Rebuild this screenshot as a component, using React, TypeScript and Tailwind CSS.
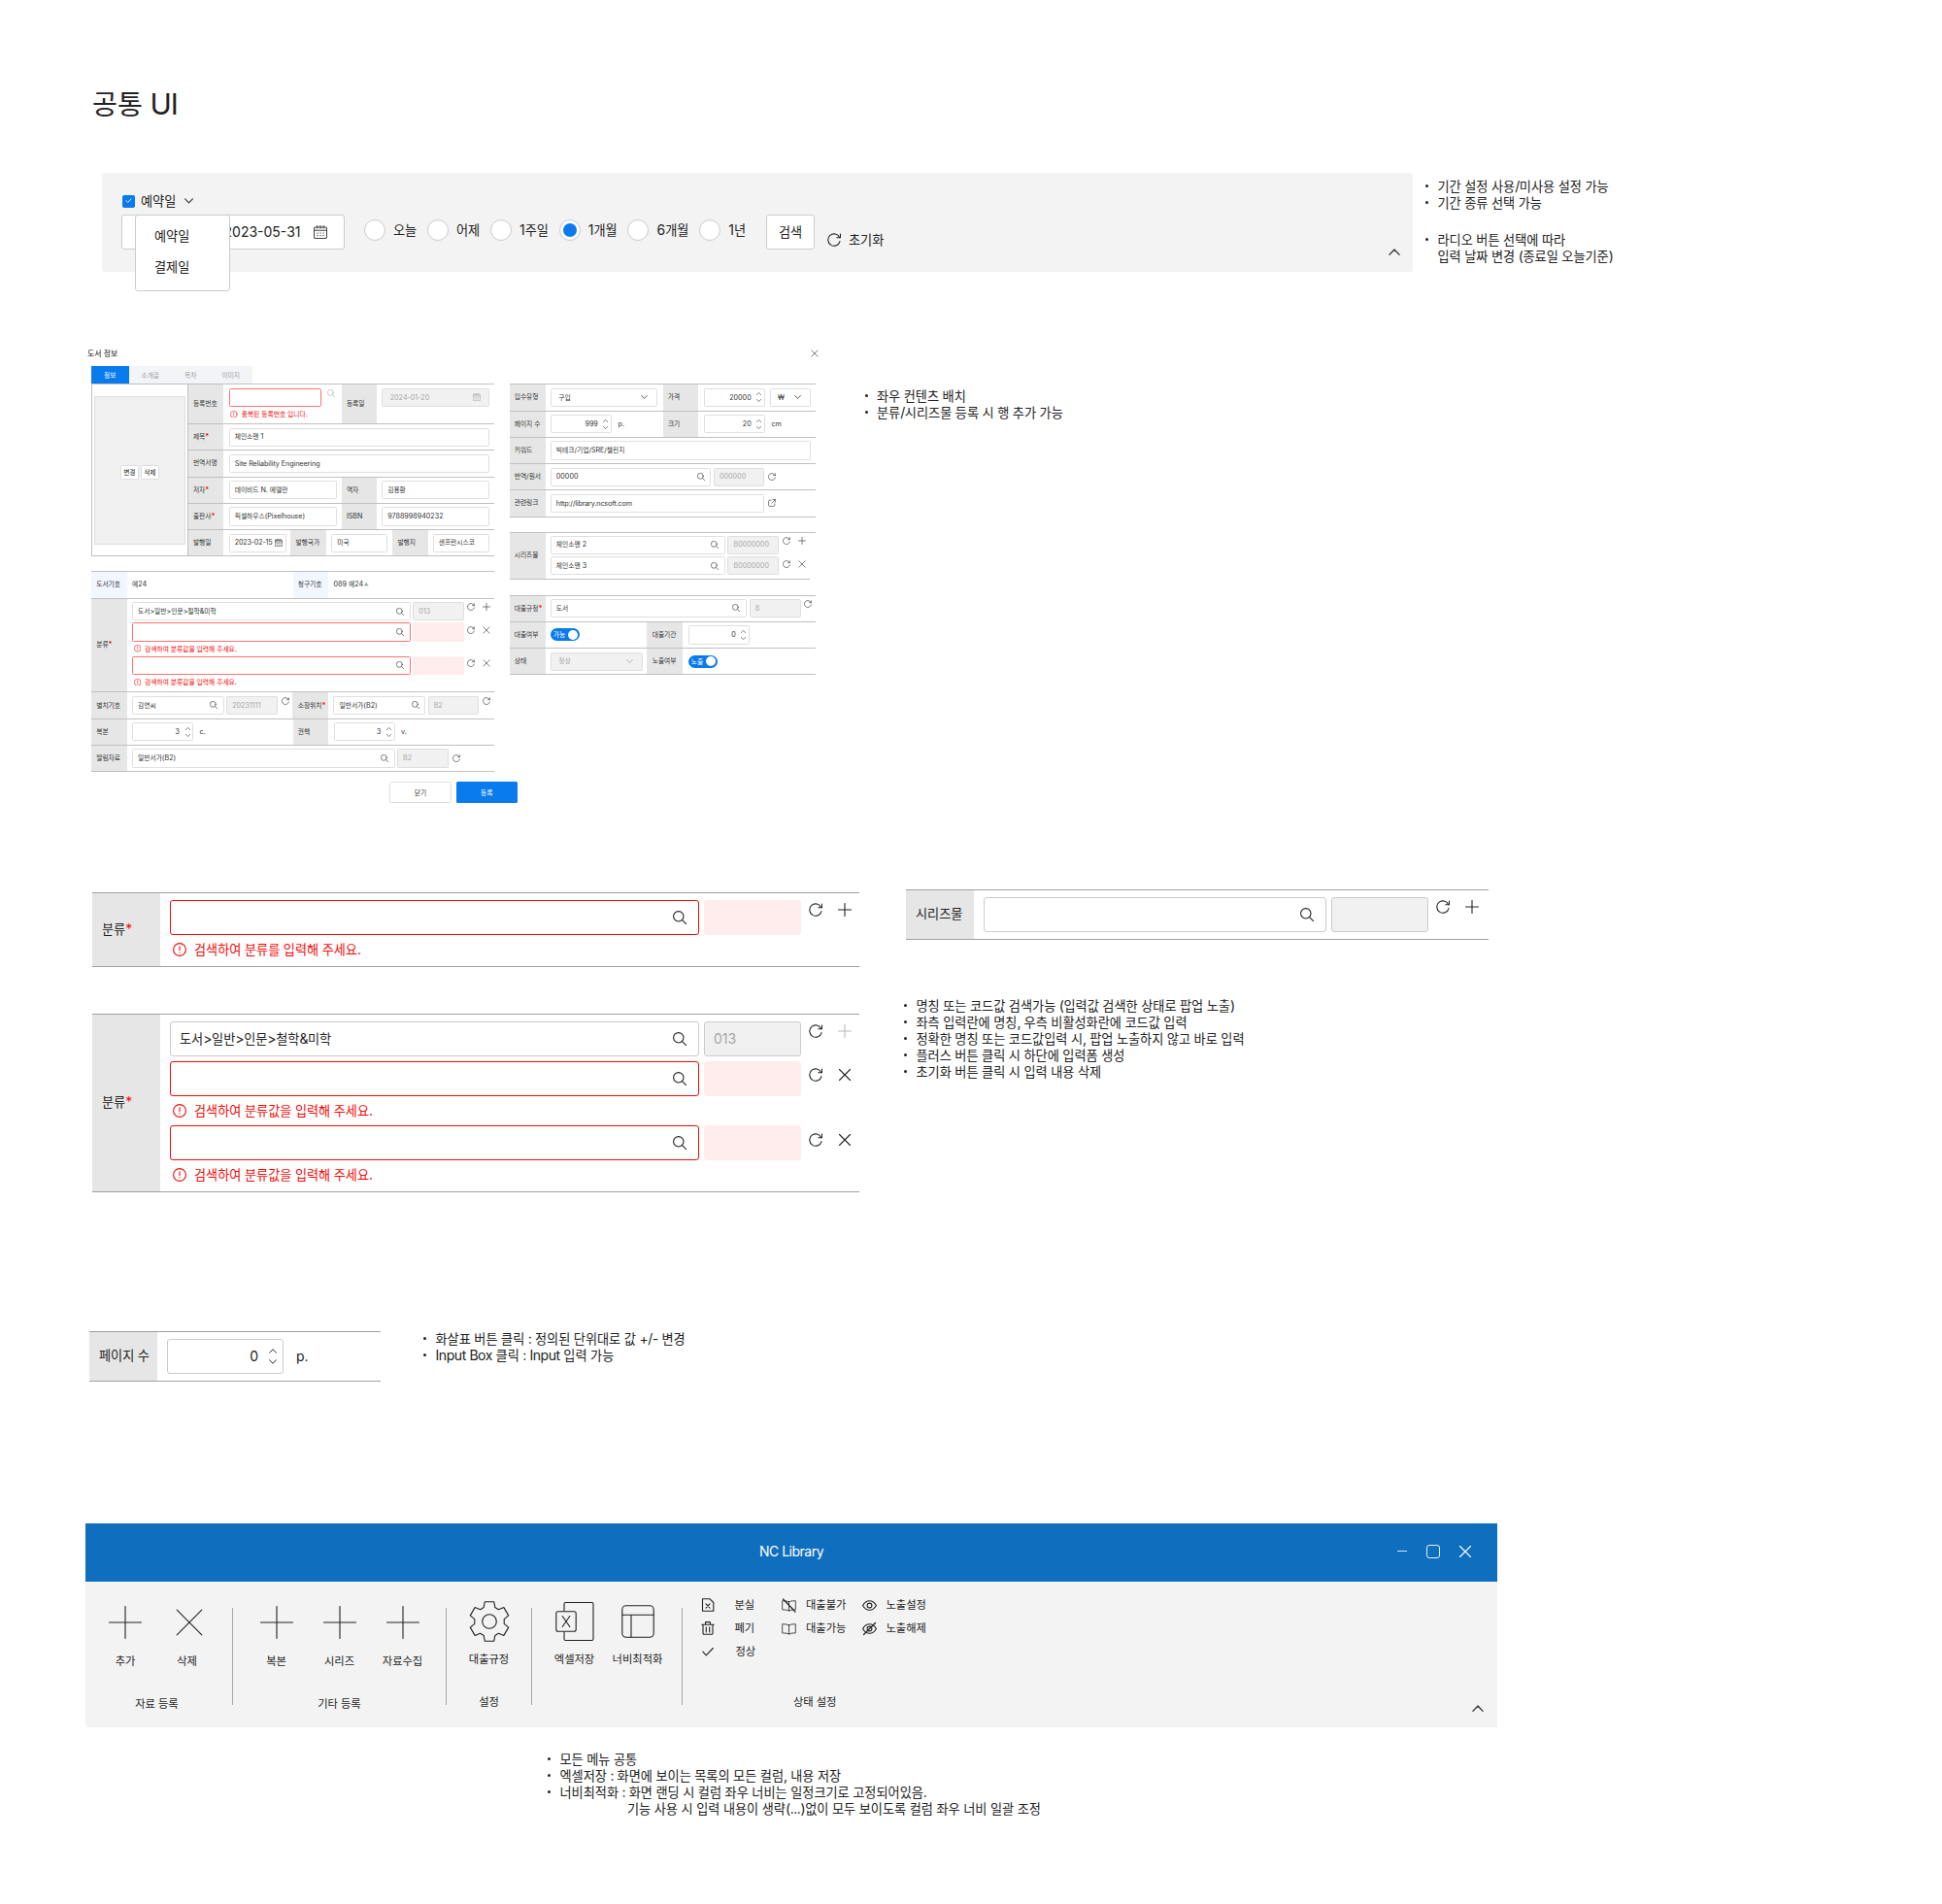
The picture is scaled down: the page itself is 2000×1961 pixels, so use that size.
import React, { type ReactNode } from 'react';

/* Hangul runs are set slightly smaller than the Latin text around them; runs without digits are tracked in. */
function T({ children }: { children: string }) {
  const parts = children.split(/([\u3131-\u318e\uac00-\ud7a3]+)/);
  return (
    <span className="whitespace-pre">
      {parts.map((p, i) =>
        i % 2 ? (
          <span key={i} className="text-[0.94em] leading-none">
            {p}
          </span>
        ) : /\d/.test(p) ? (
          p
        ) : (
          <span key={i} className="tracking-(--latin)">
            {p}
          </span>
        ),
      )}
    </span>
  );
}

/* ---------- icons ---------- */
type IconProps = { className?: string };

function Svg({ className = '', box = 14, children }: { className?: string; box?: number; children: ReactNode }) {
  return (
    <svg
      viewBox={`0 0 ${box} ${box}`}
      className={`shrink-0 ${className}`}
      fill="none"
      stroke="currentColor"
      strokeWidth="1.1"
      strokeLinecap="round"
      strokeLinejoin="round"
    >
      {children}
    </svg>
  );
}
const Search = ({ className }: IconProps) => (
  <Svg className={className}>
    <circle cx="5.8" cy="5.8" r="5.2" />
    <path d="M9.6 9.6l4 4" />
  </Svg>
);
const Refresh = ({ className }: IconProps) => (
  <Svg className={className}>
    <path d="M13 8.6A6.2 6.2 0 1 1 12.6 4.4" />
    <path d="M13.5 1v3.7H9.8" />
  </Svg>
);
const Plus = ({ className }: IconProps) => (
  <Svg className={className}>
    <path d="M7 .5v13M.5 7h13" />
  </Svg>
);
const Cross = ({ className }: IconProps) => (
  <Svg className={className}>
    <path d="M1.5 1.5l11 11M12.5 1.5l-11 11" />
  </Svg>
);
const Alert = ({ className }: IconProps) => (
  <Svg className={className}>
    <circle cx="7" cy="7" r="6.4" />
    <path d="M7 3.8v3.8M7 9.7v.3" />
  </Svg>
);
const Calendar = ({ className }: IconProps) => (
  <Svg className={className}>
    <rect x=".5" y="2" width="13" height="11.5" rx="1.5" />
    <path d="M.5 5.2h13M3.8 .5v2.6M10.2 .5v2.6M7 .5v2.6" />
    <path d="M3.8 8h.4M6.8 8h.4M9.8 8h.4M3.8 10.6h.4M6.8 10.6h.4M9.8 10.6h.4" />
  </Svg>
);
const Chevron = ({ className }: IconProps) => (
  <svg viewBox="0 0 10 6" className={`shrink-0 ${className}`} fill="none" stroke="currentColor" strokeWidth="1.200" strokeLinecap="round" strokeLinejoin="round">
    <path d="M.7 .7L5 5.2 9.3 .7" />
  </svg>
);
const External = ({ className }: IconProps) => (
  <Svg className={className}>
    <path d="M5.5 2H3a2 2 0 0 0-2 2v7a2 2 0 0 0 2 2h7a2 2 0 0 0 2-2V8.500M8.500 1H13v4.500M13 1L7 7" />
  </Svg>
);

/* ---------- notes ---------- */
function Notes({ items, className = '' }: { items: string[]; className?: string }) {
  return (
    <ul className={`text-[14px] leading-[17.1px] text-[#222] ${className}`}>
      {items.map((line) => (
        <li key={line} className="flex">
          <span className="flex h-[17px] w-[12.500px] shrink-0 items-center">
            <i className="size-[3px] rounded-full bg-[#222]" />
          </span>
          <span>
            {line.split('\n').map((l) => (
              <span key={l} className="block">
                <T>{l}</T>
              </span>
            ))}
          </span>
        </li>
      ))}
    </ul>
  );
}

/* ---------- full size form parts ---------- */
type Kind = 'normal' | 'error' | 'disabled' | 'pink';
const kinds: Record<Kind, string> = {
  normal: 'border-[#ccc] bg-white text-[#222]',
  error: 'border-[#f50a0a] bg-white text-[#222]',
  disabled: 'border-[#ccc] bg-[#f0f0f0] text-[#a6a6a6]',
  pink: 'border-[#ffecec] bg-[#ffecec] text-[#222]',
};
const miniKinds: Record<Kind, string> = {
  normal: 'border-[#dfdfdf] bg-white text-[#333]',
  error: 'border-[#fb7272] bg-white text-[#333]',
  disabled: 'border-[#dedede] bg-[#f1f1f1] text-[#a8a8a8]',
  pink: 'border-[#ffecec] bg-[#ffecec] text-[#333]',
};

function Field({ kind = 'normal', className = '', text = '', search = false }: { kind?: Kind; className?: string; text?: string; search?: boolean }) {
  return (
    <div className={`flex h-9 shrink-0 items-center rounded-[3px] border pb-px pl-[9px] ${kinds[kind]} ${className}`}>
      <T>{text}</T>
      {search && <Search className="mr-[12px] ml-auto size-[14px]" />}
    </div>
  );
}

function ErrorText({ text }: { text: string }) {
  return (
    <p className="ml-[2.500px] flex items-center text-[14px] leading-[16px] text-[#f50a0a]">
      <Alert className="mr-[8.500px] size-[14px]" />
      <T>{text}</T>
    </p>
  );
}

function FormLabel({ text, required, className = '' }: { text: string; required?: boolean; className?: string }) {
  return (
    <div className={`flex shrink-0 items-center bg-[#e6e6e6] pb-[2px] pl-[10px] text-[#222] ${className}`}>
      <T>{text}</T>
      {required && <span className="text-[#f50a0a]">*</span>}
    </div>
  );
}

function ClassRow({ text = '', kind = 'normal', code = '', remove, mutedPlus, drop }: { text?: string; kind?: Kind; code?: string; remove?: boolean; mutedPlus?: boolean; drop: string }) {
  return (
    <div className="flex">
      <Field kind={kind} text={text} search className="w-[545px]" />
      <Field kind={kind === 'error' ? 'pink' : 'disabled'} text={code} className="ml-[5px] w-[100px]" />
      <div className={`ml-2 flex gap-4 ${drop}`}>
        <Refresh className="size-[14px]" />
        {remove ? <Cross className="size-[14px]" /> : <Plus className={mutedPlus ? 'size-[14px] text-[#bbb]' : 'size-[14px]'} />}
      </div>
    </div>
  );
}

/* ---------- compact form parts ---------- */
function MRow({ children, className = 'h-[27.25px]' }: { children: ReactNode; className?: string }) {
  return <div className={`flex items-center border-t border-[#c0c0c0] ${className}`}>{children}</div>;
}
function MLabel({ text, required, className = 'w-[36.500px]', blue }: { text: string; required?: boolean; className?: string; blue?: boolean }) {
  return (
    <div className={`flex h-full shrink-0 items-center pb-px pl-[5.200px] text-[#333] ${blue ? 'bg-[#f1f6ff]' : 'bg-[#e6e6e6]'} ${className}`}>
      <T>{text}</T>
      {required && <span className="font-bold text-[#f50a0a]">*</span>}
    </div>
  );
}
function MBox({ className = '', text = '', kind = 'normal', icon }: { className?: string; text?: string; kind?: Kind; icon?: 'search' | 'cal' | 'chev' }) {
  return (
    <div className={`flex h-[19.200px] shrink-0 items-center rounded-[1.500px] border pb-[0.500px] pl-[5px] ${miniKinds[kind]} ${className}`}>
      <T>{text}</T>
      {icon === 'search' && <Search className="mr-[5.500px] ml-auto size-[8px] text-[#333]" />}
      {icon === 'cal' && <Calendar className="mr-[2.500px] ml-auto size-[8px]" />}
      {icon === 'chev' && <Chevron className="mr-[9px] ml-auto h-[4px] w-[7px]" />}
    </div>
  );
}
function MStepper({ value, className = '' }: { value: string; className?: string }) {
  return (
    <div className={`flex h-[19.200px] w-[63px] shrink-0 items-center justify-end rounded-[1.500px] border border-[#dfdfdf] bg-white pr-[2.500px] text-[#333] ${className}`}>
      <T>{value}</T>
      <span className="ml-[5.500px] flex flex-col gap-[4px]">
        <Chevron className="h-[3px] w-[5px] rotate-180" />
        <Chevron className="h-[3px] w-[5px]" />
      </span>
    </div>
  );
}
function MError({ text }: { text: string }) {
  return (
    <p className="ml-[1.500px] flex items-center leading-[9px] text-[#f50a0a]">
      <Alert className="mr-[4px] size-[7.500px]" />
      <T>{text}</T>
    </p>
  );
}
const MRefresh = ({ className = '' }: IconProps) => <Refresh className={`size-[8px] text-[#333] ${className}`} />;
function Toggle({ text, className = '' }: { text: string; className?: string }) {
  return (
    <div className={`flex h-[13px] w-[30.500px] shrink-0 items-center justify-between rounded-full bg-[#0a7bed] pr-[2px] pl-[3px] text-white ${className}`}>
      <T>{text}</T>
      <i className="size-[10px] rounded-full bg-white" />
    </div>
  );
}
function MClass({ text = '', kind = 'normal', code = '', remove }: { text?: string; kind?: Kind; code?: string; remove?: boolean }) {
  const drop = remove ? 'mt-[3.500px]' : 'mt-[1px]';
  return (
    <div className="flex">
      <MBox kind={kind} text={text} icon="search" className="w-[286.700px]" />
      <MBox kind={kind === 'error' ? 'pink' : 'disabled'} text={code} className="ml-[2.500px] w-[52.500px]" />
      <MRefresh className={`ml-[3.500px] ${drop}`} />
      {remove ? <Cross className={`ml-[8px] size-[8px] text-[#333] ${drop}`} /> : <Plus className={`ml-[8px] size-[8px] text-[#333] ${drop}`} />}
    </div>
  );
}

function BookDialog() {
  return (
    <section className="ml-[90px] w-[753px] shrink-0 text-[7.200px] leading-[9px] [--latin:-0.01em]">
      <header className="flex h-4 items-center justify-between text-[8.400px] text-[#111]">
        <T>도서 정보</T>
        <Cross className="size-[8px] text-[#333]" />
      </header>
      <div className="mt-[5px] ml-1 flex items-start">
        <div className="w-[415px]">
          <nav className="flex h-[18.300px] w-[166px] bg-[#f2f4f8] text-[#a0a0a0]">
            <span className="mr-[1.500px] flex w-[38.500px] items-center justify-center bg-[#0a7bed] text-white">
              <T>정보</T>
            </span>
            {['소개글', '목차', '이미지'].map((t) => (
              <span key={t} className="flex w-[41.500px] items-center justify-center">
                <T>{t}</T>
              </span>
            ))}
          </nav>
          <div className="flex border-b border-[#c0c0c0]">
            <div className="w-[99.700px] shrink-0 border-x border-t border-[#c0c0c0] px-[1.500px] pt-[12px]">
              <div className="flex h-[153px] items-center justify-center gap-[2.500px] border border-[#dedede] bg-[#f0f0f0] pt-[3px]">
                {['변경', '삭제'].map((t) => (
                  <span key={t} className="flex h-[15px] w-[18.500px] items-center justify-center rounded-[1.500px] border border-[#dedede] bg-white text-[#222]">
                    <T>{t}</T>
                  </span>
                ))}
              </div>
            </div>
            <div className="flex-1">
              <MRow className="h-[40.800px]">
                <MLabel text="등록번호" className="w-[36.500px]" />
                <div className="ml-[5.500px] w-[116px] self-start pt-[3.700px]">
                  <div className="flex">
                    <MBox kind="error" className="w-[95px]" />
                    <Search className="mt-[1px] ml-[6px] size-[8px] text-[#aaa]" />
                  </div>
                  <div className="mt-[3px]">
                    <MError text="중복된 등록번호 입니다." />
                  </div>
                </div>
                <MLabel text="등록일" className="w-[36.500px]" />
                <MBox kind="disabled" text="2024-01-20" icon="cal" className="mt-[3.700px] ml-[5px] w-[110.700px] self-start pr-[5.500px] pl-[7.500px]" />
              </MRow>
              <MRow>
                <MLabel text="제목" required />
                <MBox text="체인소맨 1" className="ml-[5.500px] w-[268.300px]" />
              </MRow>
              <MRow>
                <MLabel text="번역서명" />
                <MBox text="Site Reliability Engineering" className="ml-[5.500px] w-[268.300px]" />
              </MRow>
              <MRow>
                <MLabel text="저자" required />
                <MBox text="데이비드 N. 에델만" className="mr-[5px] ml-[5.500px] w-[111px]" />
                <MLabel text="역자" />
                <MBox text="김용환" className="ml-[5px] w-[110.700px]" />
              </MRow>
              <MRow>
                <MLabel text="출판사" required />
                <MBox text="픽셀하우스(Pixelhouse)" className="mr-[5px] ml-[5.500px] w-[111px]" />
                <MLabel text="ISBN" />
                <MBox text="9788998940232" className="ml-[5px] w-[110.700px]" />
              </MRow>
              <MRow>
                <MLabel text="발행일" />
                <MBox text="2023-02-15" icon="cal" className="mr-[4.500px] ml-[5.500px] w-[59px] pl-[2px] tracking-[-0.025em]" />
                <MLabel text="발행국가" />
                <MBox text="미국" className="mr-[5px] ml-[5.500px] w-[58px]" />
                <MLabel text="발행지" />
                <MBox text="샌프란시스코" className="ml-[5px] w-[58px]" />
              </MRow>
            </div>
          </div>

          <div className="mt-[15px] border-b border-[#c0c0c0]">
            <MRow>
              <MLabel text="도서기호" blue />
              <span className="w-[171px] pb-px pl-[5.500px] text-[#333]">
                <T>에24</T>
              </span>
              <MLabel text="청구기호" blue />
              <span className="pb-px pl-[5.500px] text-[#333]">
                <T>089 에24ㅅ</T>
              </span>
            </MRow>
            <MRow className="h-[96.800px]">
              <MLabel text="분류" required />
              <div className="ml-[5.500px] self-start pt-[3.700px]">
                <MClass text="도서>일반>인문>철학&미학" code="013" />
                <div className="mt-[2px]">
                  <MClass kind="error" remove />
                </div>
                <div className="my-[3px]">
                  <MError text="검색하여 분류값을 입력해 주세요." />
                </div>
                <MClass kind="error" remove />
                <div className="mt-[3px]">
                  <MError text="검색하여 분류값을 입력해 주세요." />
                </div>
              </div>
            </MRow>
            <MRow>
              <MLabel text="별치기호" />
              <MBox text="김연씨" icon="search" className="ml-[5.500px] w-[94.700px]" />
              <MBox text="20231111" kind="disabled" className="ml-[2.500px] w-[52.500px]" />
              <MRefresh className="mr-[3.300px] mb-[9px] ml-[4.500px]" />
              <MLabel text="소장위치" required />
              <MBox text="일반서가(B2)" icon="search" className="ml-[5.500px] w-[94.700px]" />
              <MBox text="B2" kind="disabled" className="ml-[2.500px] w-[52.500px]" />
              <MRefresh className="mb-[9px] ml-[3.500px]" />
            </MRow>
            <MRow>
              <MLabel text="복본" />
              <MStepper value="3" className="ml-[5.500px]" />
              <span className="w-[102.500px] pl-[6.500px] text-[#333]">c.</span>
              <MLabel text="권책" />
              <MStepper value="3" className="ml-[5.500px]" />
              <span className="pl-[6.500px] text-[#333]">v.</span>
            </MRow>
            <MRow>
              <MLabel text="딸림자료" />
              <MBox text="일반서가(B2)" icon="search" className="ml-[5.500px] w-[270.500px]" />
              <MBox text="B2" kind="disabled" className="ml-[2.500px] w-[52.500px]" />
              <MRefresh className="ml-[4px]" />
            </MRow>
          </div>
        </div>

        <div className="mt-[18.300px] ml-[15.500px] w-[315.500px]">
          <div className="border-b border-[#c0c0c0]">
            <MRow>
              <MLabel text="입수유형" className="w-[37px]" />
              <MBox text="구입" icon="chev" className="mr-[5.700px] ml-[5.300px] w-[110.200px] pl-[7.500px]" />
              <MLabel text="가격" />
              <MStepper value="20000" className="ml-[5.500px]" />
              <MBox text="₩" icon="chev" className="ml-[5.300px] w-[42.300px] pl-[7px]" />
            </MRow>
            <MRow>
              <MLabel text="페이지 수" className="w-[37px]" />
              <MStepper value="999" className="ml-[5.300px]" />
              <span className="w-[52.900px] pl-[6.800px] text-[#333]">p.</span>
              <MLabel text="크기" />
              <MStepper value="20" className="ml-[5.500px]" />
              <span className="pl-[6.800px] text-[#333]">cm</span>
            </MRow>
            <MRow>
              <MLabel text="키워드" className="w-[37px]" />
              <MBox text="빅테크/기업/SRE/챌린지" className="ml-[5.300px] w-[268.500px]" />
            </MRow>
            <MRow>
              <MLabel text="번역/원서" className="w-[37px]" />
              <MBox text="00000" icon="search" className="ml-[5.300px] w-[165.600px]" />
              <MBox text="000000" kind="disabled" className="ml-[2.600px] w-[52.500px]" />
              <MRefresh className="ml-[4px]" />
            </MRow>
            <MRow>
              <MLabel text="관련링크" className="w-[37px]" />
              <MBox text="http://library.ncsoft.com" className="ml-[5.300px] w-[220.700px] [--latin:-0.02em]" />
              <External className="ml-[4px] size-[8px] text-[#333]" />
            </MRow>
          </div>

          <div className="mt-[15px]">
            <MRow className="h-[48px]">
              <MLabel text="시리즈물" className="w-[37px]" />
              <div className="ml-[5.300px] flex flex-col gap-[2.500px]">
                {['체인소맨 2', '체인소맨 3'].map((t, i) => (
                  <div key={t} className="flex">
                    <MBox text={t} icon="search" className="w-[180.200px]" />
                    <MBox text="B0000000" kind="disabled" className="ml-[2.500px] w-[52.900px]" />
                    <MRefresh className={i ? 'mt-[4px] ml-[3.500px]' : 'mt-[1.500px] ml-[3.500px]'} />
                    {i ? <Cross className="mt-[4px] ml-[8px] size-[8px] text-[#333]" /> : <Plus className="mt-[1.500px] ml-[8px] size-[8px] text-[#333]" />}
                  </div>
                ))}
              </div>
            </MRow>
            <hr className="w-[309px] border-[#c0c0c0]" />
          </div>

          <div className="mt-[16px] border-b border-[#c0c0c0]">
            <MRow>
              <MLabel text="대출규정" required className="w-[37px]" />
              <MBox text="도서" icon="search" className="ml-[5.300px] w-[202.200px]" />
              <MBox text="8" kind="disabled" className="ml-[2.800px] w-[52.800px]" />
              <MRefresh className="mb-[9px] ml-[3.600px]" />
            </MRow>
            <MRow>
              <MLabel text="대출여부" className="w-[37px]" />
              <Toggle text="가능" className="mr-[69.200px] ml-[5.300px]" />
              <MLabel text="대출기간" className="w-[37px]" />
              <MStepper value="0" className="ml-[5.200px]" />
            </MRow>
            <MRow>
              <MLabel text="상태" className="w-[37px]" />
              <MBox text="정상" kind="disabled" icon="chev" className="mr-[4.800px] ml-[5.300px] w-[94.900px] pl-[7.500px]" />
              <MLabel text="노출여부" className="w-[37px]" />
              <Toggle text="노출" className="ml-[5.200px]" />
            </MRow>
          </div>
        </div>
      </div>
      <footer className="mt-[10px] ml-[311px] flex gap-[4.500px]">
        <span className="flex h-[22px] w-[64px] items-center justify-center rounded-[1.500px] border border-[#dedede] text-[#333]">
          <T>닫기</T>
        </span>
        <span className="flex h-[22px] w-[63.500px] items-center justify-center rounded-[1.500px] bg-[#0a7bed] text-white">
          <T>등록</T>
        </span>
      </footer>
    </section>
  );
}

/* ---------- period filter ---------- */
function FilterBar() {
  return (
    <section className="flex h-[102px] w-[1350px] flex-col rounded-[3px] bg-[#f3f3f3] pt-[21px] pl-5 text-[14px] leading-[16px] text-[#222]">
      <div className="flex h-4 items-center">
        <span className="ml-px flex size-[13px] items-center justify-center rounded-[2px] bg-[#0a7bed] text-white">
          <svg viewBox="0 0 8 6" className="w-[7px]" fill="none" stroke="currentColor">
            <path d="M.8 2.800L3 5 7.200 .8" />
          </svg>
        </span>
        <span className="ml-1.5">
          <T>예약일</T>
        </span>
        <Chevron className="ml-[8.500px] h-[6px] w-[9px] text-[#333]" />
      </div>
      <div className="mt-1.5 flex h-9 items-start">
        <div className="relative flex h-9 w-[230px] shrink-0 items-center justify-end rounded-[3px] border border-[#ccc] bg-white pr-[17px] pb-px">
          <T>2023-05-31</T>
          <Calendar className="ml-[13.500px] size-[14px] text-[#444]" />
          <div className="absolute -top-px left-[13px] flex h-[79px] w-[98px] flex-col gap-4 rounded-[3px] border border-[#ccc] bg-white pt-[13px] pl-[19px]">
            <T>예약일</T>
            <T>결제일</T>
          </div>
        </div>
        <div className="mt-[5px] ml-5 flex w-[414px] shrink-0 gap-[10.800px]">
          {['오늘', '어제', '1주일', '1개월', '6개월', '1년'].map((t) => (
            <label key={t} className="flex items-center gap-2">
              <span className="flex size-[22px] items-center justify-center rounded-full border border-[#ccc] bg-white">
                {t === '1개월' && <i className="size-[14px] rounded-full bg-[#0a7bed]" />}
              </span>
              <T>{t}</T>
            </label>
          ))}
        </div>
        <button className="h-9 w-[50px] rounded-[3px] border border-[#ccc] bg-white pb-px">
          <T>검색</T>
        </button>
        <span className="mt-[17.500px] ml-[12.500px] flex items-center gap-[8.500px]">
          <Refresh className="size-[14px]" />
          <T>초기화</T>
        </span>
        <Chevron className="mt-[34.500px] mr-[13px] ml-auto h-[7px] w-[12px] rotate-180 text-[#444]" />
      </div>
    </section>
  );
}

/* ---------- ribbon ---------- */
const BigPlus = () => (
  <Svg box={34} className="size-[34px]">
    <path d="M17 .5v33M.5 17h33" />
  </Svg>
);
const BigCross = () => (
  <Svg box={34} className="ml-[4px] size-[34px]">
    <path d="M4.200 4.200l25.600 25.600M29.800 4.200L4.200 29.800" />
  </Svg>
);
const Gear = () => (
  <Svg box={42} className="size-[42px]">
    <circle cx="21" cy="21" r="7.300" />
    <path d="M16.200.8h9.600l1 5.800 3.600 2.100 5.500-2.100 4.800 8.300-4.500 3.800v4.600l4.500 3.800-4.800 8.300-5.500-2.100-3.600 2.100-1 5.800h-9.600l-1-5.800-3.600-2.100-5.500 2.100-4.800-8.300 4.500-3.800v-4.600l-4.500-3.800 4.800-8.300 5.500 2.100 3.600-2.100z" />
  </Svg>
);
const Excel = () => (
  <svg viewBox="0 0 40 42" className="h-[42px] w-[40px]" fill="none" stroke="currentColor" strokeWidth="1.100" strokeLinejoin="round" strokeLinecap="round">
    <path d="M9 10V3a1.500 1.500 0 0 1 1.500-1.500h27A1.500 1.500 0 0 1 39 3v36a1.500 1.500 0 0 1-1.500 1.500h-27A1.500 1.500 0 0 1 9 39v-7" />
    <rect x=".8" y="10.800" width="20.400" height="20.400" rx="2" />
    <path d="M7.200 15.500l7.600 11M14.800 15.500l-7.600 11" />
  </svg>
);
const Layout = () => (
  <Svg box={34} className="size-[34px]">
    <rect x=".8" y=".8" width="32.400" height="32.400" rx="4" />
    <path d="M.8 10.300h32.400M10 10.300v22.900" />
  </Svg>
);
const FileX = () => (
  <Svg className="size-[14px]">
    <path d="M1.500 .7h7.300L12.800 4.500v8.800H1.500zM5 5.800l4 4.400M9 5.800l-4 4.400" />
  </Svg>
);
const Trash = () => (
  <Svg className="size-[14px]">
    <path d="M.8 3.300h12.400M4.500 3.300V1.200q0-.6.600-.6h3.800q.6 0 .6.600v2.100M2 3.300v9q0 1 1 1h8q1 0 1-1v-9M5.300 5.800v5.200M8.700 5.800v5.200" />
  </Svg>
);
const Check = () => (
  <Svg className="size-[14px]">
    <path d="M1.800 7.200l3.500 3.600 7-7.300" />
  </Svg>
);
const Book = ({ off }: { off?: boolean }) => (
  <Svg className="size-[15px]" box={15}>
    <path d="M7.500 3.800Q6 2.700 .7 2.700v9.200q5.300 0 6.800 1.100 1.500-1.100 6.800-1.100V2.700Q9 2.700 7.500 3.800zM7.500 3.800V13" strokeWidth=".8" />
    {off && <path d="M1.500 1l12.500 13" strokeWidth="1.200" />}
  </Svg>
);
const Eye = ({ off }: { off?: boolean }) => (
  <Svg className="size-[15px]" box={15}>
    <path d="M.6 7.500Q3.200 2.700 7.500 2.700t6.900 4.800Q11.800 12.300 7.500 12.300T.6 7.500z" />
    <circle cx="7.500" cy="7.500" r="2.400" />
    {off && <path d="M1.500 13.500L13.500 1.500" strokeWidth="1.200" />}
  </Svg>
);

function Tool({ icon, text, className = 'w-[65px]' }: { icon: ReactNode; text: string; className?: string }) {
  return (
    <div className={`flex flex-col items-center ${className}`}>
      <span className="flex h-[46px] items-center justify-center">{icon}</span>
      <T>{text}</T>
    </div>
  );
}
function Group({ className, label, children }: { className: string; label: string; children: ReactNode }) {
  return (
    <div className={`flex shrink-0 flex-col items-center justify-between ${className}`}>
      <div className="flex">{children}</div>
      <T>{label}</T>
    </div>
  );
}
const Divider = () => <i className="mt-[27px] h-[100px] w-px shrink-0 bg-[#a6a6a6]" />;

function Ribbon() {
  return (
    <section className="ml-[88px] w-[1454px]">
      <header className="grid h-[60px] grid-cols-3 items-center bg-[#106ebe] pb-[3px] text-[14px] text-white">
        <span />
        <span className="text-center leading-[16px] tracking-[-0.035em]">NC Library</span>
        <span className="mr-[25.500px] flex items-center justify-end">
          <i className="h-px w-[10px] bg-white/80" />
          <i className="mr-[19px] ml-[20px] size-[14px] rounded-[3px] border border-white/90" />
          <Cross className="size-[14px]" />
        </span>
      </header>
      <div className="flex h-[150px] bg-[#f3f3f3] text-[12px] leading-[16px] text-[#222]">
        <Group className="h-[134px] w-[151px] pt-[18.500px] pr-[4px]" label="자료 등록">
          <Tool icon={<BigPlus />} text="추가" className="-ml-[3px] w-[65px] gap-[9px]" />
          <Tool icon={<BigCross />} text="삭제" className="w-[62px] gap-[9px]" />
        </Group>
        <Divider />
        <Group className="h-[134px] w-[219px] pt-[18.500px]" label="기타 등록">
          <Tool icon={<BigPlus />} text="복본" className="w-[65px] gap-[9px]" />
          <Tool icon={<BigPlus />} text="시리즈" className="w-[65px] gap-[9px]" />
          <Tool icon={<BigPlus />} text="자료수집" className="w-[65px] gap-[9px]" />
        </Group>
        <Divider />
        <Group className="h-[132px] w-[87px] pt-[18px]" label="설정">
          <Tool icon={<Gear />} text="대출규정" className="w-[65px] gap-2" />
        </Group>
        <Divider />
        <div className="flex w-[154px] pt-[18px] pl-[11px]">
          <Tool icon={<Excel />} text="엑셀저장" className="w-[65px] gap-2" />
          <Tool icon={<Layout />} text="너비최적화" className="w-[65px] gap-2" />
        </div>
        <Divider />
        <div className="flex h-[132px] w-[270px] flex-col justify-between pt-[16px] pl-[19px]">
          <div className="flex">
            <div className="flex w-[82.500px] flex-col gap-[8px]">
              <span className="flex items-center gap-[20.500px]"><FileX /><T>분실</T></span>
              <span className="flex items-center gap-[20.500px]"><Trash /><T>폐기</T></span>
              <span className="flex items-center gap-[21.500px]"><Check /><T>정상</T></span>
            </div>
            <div className="flex w-[83.500px] flex-col gap-[8px]">
              <span className="flex items-center gap-[10.500px]"><Book off /><T>대출불가</T></span>
              <span className="flex items-center gap-[10.500px]"><Book /><T>대출가능</T></span>
            </div>
            <div className="flex flex-col gap-[8px]">
              <span className="flex items-center gap-[9.500px]"><Eye /><T>노출설정</T></span>
              <span className="flex items-center gap-[9.500px]"><Eye off /><T>노출해제</T></span>
            </div>
          </div>
          <span className="pl-[95px]">
            <T>상태 설정</T>
          </span>
        </div>
        <Chevron className="mr-[14px] mb-[16px] ml-auto h-[7px] w-[12px] rotate-180 self-end text-[#444]" />
      </div>
    </section>
  );
}

export default function App() {
  return (
    <main className="flex h-[1961px] w-[2000px] flex-col overflow-hidden bg-white font-['Inter','Noto_Sans_CJK_KR',sans-serif] text-[#222] [--latin:-0.03em]">
      <h1 className="mt-[89px] ml-[95px] text-[30px] leading-[36px]">
        <T>공통 UI</T>
      </h1>

      <div className="mt-[53px] ml-[105px] flex h-[102px] shrink-0">
        <FilterBar />
        <div className="mt-[5px] ml-[13px]">
          <Notes items={['기간 설정 사용/미사용 설정 가능', '기간 종류 선택 가능']} />
          <Notes className="mt-[21px]" items={['라디오 버튼 선택에 따라\n입력 날짜 변경 (종료일 오늘기준)']} />
        </div>
      </div>

      <div className="mt-[76px] flex h-[560px] shrink-0">
        <BookDialog />
        <Notes className="mt-[42.500px] ml-[47.500px]" items={['좌우 컨텐츠 배치', '분류/시리즈물 등록 시 행 추가 가능']} />
      </div>

      <div className="flex h-[455px] shrink-0 text-[14px] leading-[16px]">
        <div className="mt-[3px] ml-[95px] w-[790px]">
          <div className="flex h-[77px] border-y border-[#a0a0a0]">
            <FormLabel text="분류" required className="w-[70px]" />
            <div className="pt-[7px] pl-[10px]">
              <ClassRow kind="error" drop="mt-[3px]" />
              <div className="mt-[6.500px]">
                <ErrorText text="검색하여 분류를 입력해 주세요." />
              </div>
            </div>
          </div>
          <div className="mt-[48px] flex h-[184px] border-y border-[#a0a0a0]">
            <FormLabel text="분류" required className="w-[70px]" />
            <div className="pt-[7px] pl-[10px]">
              <ClassRow text="도서>일반>인문>철학&미학" code="013" mutedPlus drop="mt-[3px]" />
              <div className="mt-[5px]">
                <ClassRow kind="error" remove drop="mt-[7px]" />
              </div>
              <div className="mt-[6.500px] mb-[7.500px]">
                <ErrorText text="검색하여 분류값을 입력해 주세요." />
              </div>
              <ClassRow kind="error" remove drop="mt-[8px]" />
              <div className="mt-[6.500px]">
                <ErrorText text="검색하여 분류값을 입력해 주세요." />
              </div>
            </div>
          </div>
        </div>
        <div className="ml-[48px] w-[600px]">
          <div className="flex h-[52px] border-y border-[#a0a0a0]">
            <FormLabel text="시리즈물" className="w-[70px]" />
            <div className="flex pt-[7px] pl-[10px]">
              <Field search className="w-[353px]" />
              <Field kind="disabled" className="ml-[5px] w-[100px]" />
              <div className="mt-[3px] ml-2 flex gap-4">
                <Refresh className="size-[14px]" />
                <Plus className="size-[14px]" />
              </div>
            </div>
          </div>
          <Notes
            className="mt-[58.500px] -ml-[2px]"
            items={[
              '명칭 또는 코드값 검색가능 (입력값 검색한 상태로 팝업 노출)',
              '좌측 입력란에 명칭, 우측 비활성화란에 코드값 입력',
              '정확한 명칭 또는 코드값입력 시, 팝업 노출하지 않고 바로 입력',
              '플러스 버튼 클릭 시 하단에 입력폼 생성',
              '초기화 버튼 클릭 시 입력 내용 삭제',
            ]}
          />
        </div>
      </div>

      <div className="flex h-[198px] shrink-0 items-start pl-[92px] text-[14px] leading-[16px]">
        <div className="flex h-[52px] w-[300px] items-stretch border-y border-[#a0a0a0]">
          <FormLabel text="페이지 수" className="w-[70px]" />
          <div className="mt-[7px] ml-[10px] flex h-9 w-[120px] items-center justify-end rounded-[3px] border border-[#ccc] pr-[6px] pb-px">
            <span>0</span>
            <span className="ml-[11px] flex flex-col gap-[6px]">
              <Chevron className="h-[5px] w-[8px] rotate-180" />
              <Chevron className="h-[5px] w-[8px]" />
            </span>
          </div>
          <span className="self-center pb-px pl-[13px]">p.</span>
        </div>
        <Notes className="-mt-px ml-[44px]" items={['화살표 버튼 클릭 : 정의된 단위대로 값 +/- 변경', 'Input Box 클릭 : Input 입력 가능']} />
      </div>

      <Ribbon />

      <div className="mt-[23.500px] ml-[564px]">
        <Notes
          items={[
            '모든 메뉴 공통',
            '엑셀저장 : 화면에 보이는 목록의 모든 컬럼, 내용 저장',
            '너비최적화 : 화면 랜딩 시 컬럼 좌우 너비는 일정크기로 고정되어있음.',
          ]}
        />
        <p className="pl-[82px] text-[14px] leading-[17.100px]">
          <T>기능 사용 시 입력 내용이 생략(...)없이 모두 보이도록 컬럼 좌우 너비 일괄 조정</T>
        </p>
      </div>
    </main>
  );
}
